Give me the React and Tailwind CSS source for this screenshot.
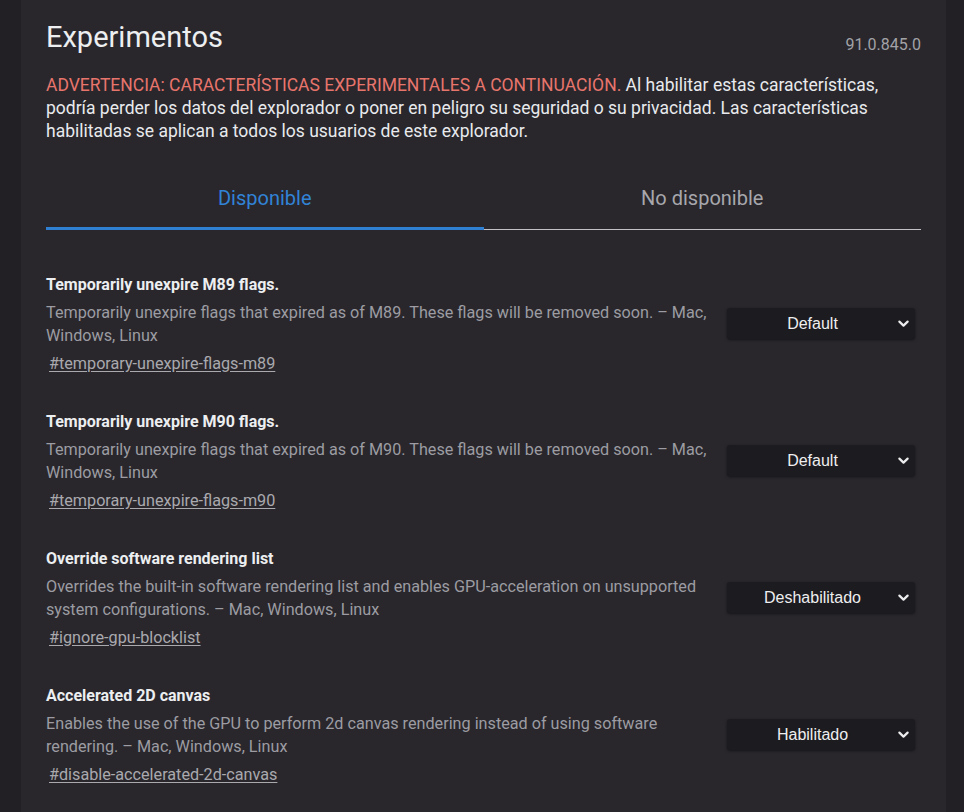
import React from "react";

const items = [
  {
    title: "Temporarily unexpire M89 flags.",
    desc: "Temporarily unexpire flags that expired as of M89. These flags will be removed soon. – Mac, Windows, Linux",
    link: "#temporary-unexpire-flags-m89",
    value: "Default",
  },
  {
    title: "Temporarily unexpire M90 flags.",
    desc: "Temporarily unexpire flags that expired as of M90. These flags will be removed soon. – Mac, Windows, Linux",
    link: "#temporary-unexpire-flags-m90",
    value: "Default",
  },
  {
    title: "Override software rendering list",
    desc: "Overrides the built-in software rendering list and enables GPU-acceleration on unsupported system configurations. – Mac, Windows, Linux",
    link: "#ignore-gpu-blocklist",
    value: "Deshabilitado",
  },
  {
    title: "Accelerated 2D canvas",
    desc: "Enables the use of the GPU to perform 2d canvas rendering instead of using software rendering. – Mac, Windows, Linux",
    link: "#disable-accelerated-2d-canvas",
    value: "Habilitado",
  },
];

function Chevron() {
  return (
    <svg width="11" height="8" viewBox="0 0 11 8" className="shrink-0">
      <path d="M1.4 1.6 L5.5 5.6 L9.6 1.6" fill="none" stroke="#ececee" strokeWidth="2.2" strokeLinecap="round" strokeLinejoin="round" />
    </svg>
  );
}

function Item({ item }) {
  return (
    <div className="flex items-start mb-[37px]">
      <div className="w-[669px] shrink-0">
        <div className="text-[16px] leading-[20px] font-bold text-[#eceef0]">{item.title}</div>
        <div className="mt-[6px] text-[16.2px] leading-[23px] text-[#9c9ca2]">{item.desc}</div>
        <div className="mt-[5px] text-[16.2px] leading-[23px] pl-[3px]">
          <span className="text-[#a9a9ae] underline underline-offset-2">{item.link}</span>
        </div>
      </div>
      <div className="ml-[12px] mt-[33px] w-[188px] h-[31px] bg-[#1c1b1f] rounded-[3px] shadow-[0_1px_3px_rgba(0,0,0,0.5)] flex items-center pr-[6px]">
        <span className="flex-1 text-center text-[16px] text-[#eeeeef]" style={{ fontFamily: '"Liberation Sans", Arial, sans-serif' }}>
          {item.value}
        </span>
        <Chevron />
      </div>
    </div>
  );
}

export default function App() {
  return (
    <div className="min-h-screen w-full bg-[#222025] flex" style={{ fontFamily: 'Roboto, "Noto Sans", sans-serif' }}>
      <div className="ml-[21px] w-[925px] min-h-[812px] bg-[#29272c] px-[25px] pt-[20px]">
        <div className="flex justify-between items-start">
          <h1 className="text-[29px] leading-[34px] text-[#eceef0] font-normal">Experimentos</h1>
          <div className="mt-[15px] text-[16px] leading-[20px] text-[#a2a2a7]">91.0.845.0</div>
        </div>
        <p className="mt-[19px] text-[17.5px] leading-[23px] text-[#e8eaed]">
          <span className="text-[#e8756c]">ADVERTENCIA: CARACTERÍSTICAS EXPERIMENTALES A CONTINUACIÓN.</span> Al habilitar estas características, podría perder los datos del explorador o poner en peligro su seguridad o su privacidad. Las características habilitadas se aplican a todos los usuarios de este explorador.
        </p>
        <div className="mt-[43px] flex items-end">
          <div className="flex-1 text-center text-[20px] leading-[24px] text-[#3183d6] pb-[17px] border-b-[3px] border-[#2f80d2]">
            Disponible
          </div>
          <div className="flex-1 text-center text-[20px] leading-[24px] text-[#a7a7ac] pb-[19px] border-b border-[#c2c2c6]">
            No disponible
          </div>
        </div>
        <div className="mt-[45px]">
          {items.map((it) => (
            <Item key={it.link} item={it} />
          ))}
        </div>
      </div>
    </div>
  );
}
